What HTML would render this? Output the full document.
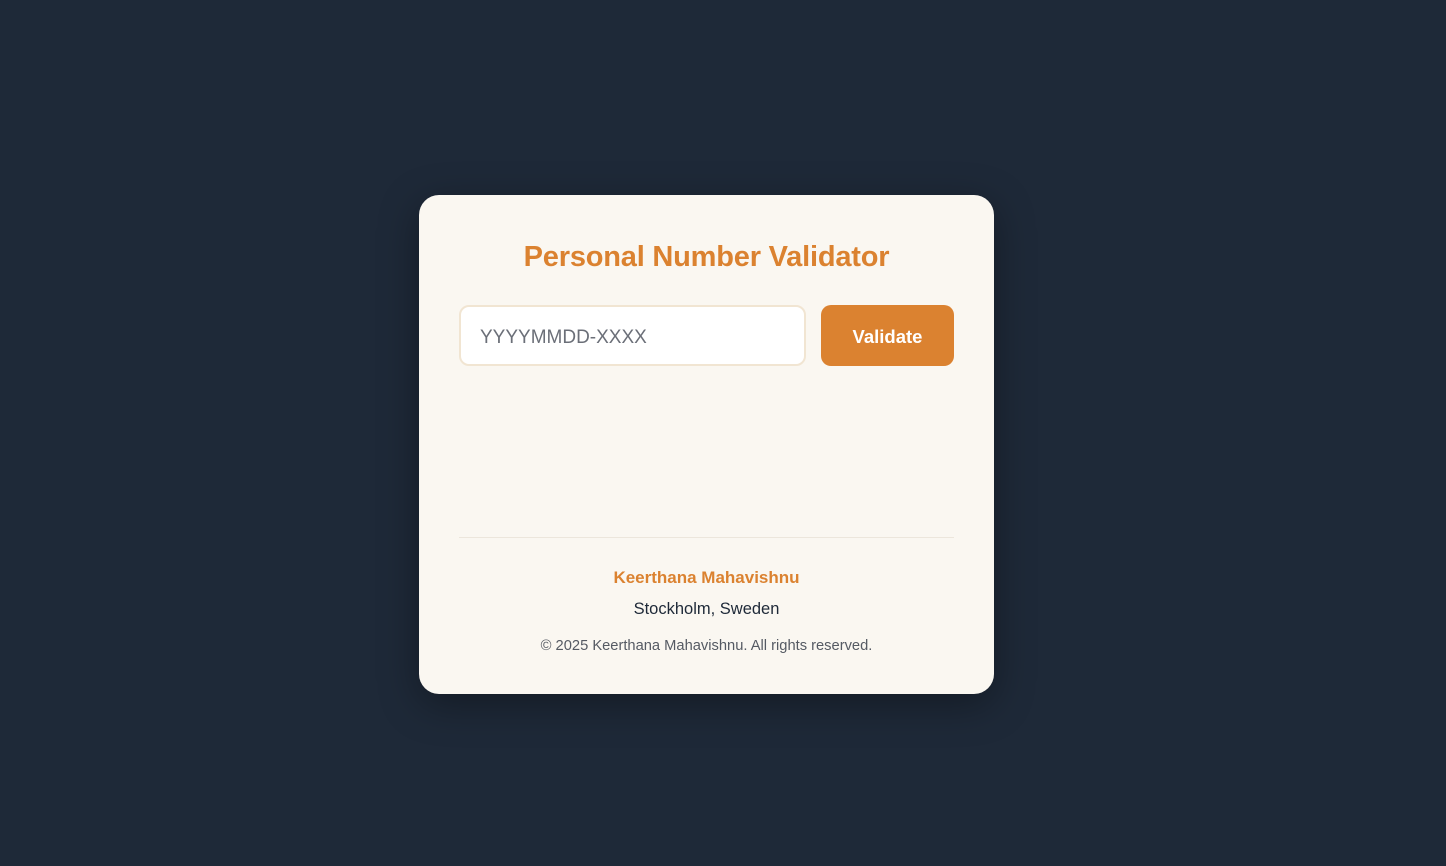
<!DOCTYPE html>
<html><head><meta charset="utf-8"><style>
html,body{margin:0;padding:0;}
body{width:1446px;height:866px;background:#1e2938;font-family:"Liberation Sans",sans-serif;position:relative;overflow:hidden;}
.card{position:absolute;left:419px;top:195px;width:575px;height:499px;background:#faf7f1;border-radius:20px;box-shadow:0 10px 40px rgba(0,0,0,.35);}
.t{position:absolute;left:0;width:575px;text-align:center;white-space:nowrap;}
.title{top:42px;font-size:29px;font-weight:bold;color:#db8230;line-height:40px;letter-spacing:-0.2px;}
.inp{position:absolute;left:40px;top:110px;width:343px;height:57px;border:2px solid #f1e5d2;border-radius:10px;background:#fff;box-sizing:content-box;}
.inp span{position:absolute;left:19px;top:2px;line-height:57px;font-size:19px;color:#6b6f78;}
.btn{position:absolute;left:402px;top:112px;width:133px;height:61px;background:#db8230;border-radius:10px;color:#fff;font-weight:bold;font-size:18.5px;line-height:61px;text-align:center;}
.btn{top:110px;padding-top:2px;height:59px;line-height:59px;}
.hr{position:absolute;left:40px;top:342px;width:495px;height:1px;background:#ece6dc;}
.name{top:371px;font-size:17px;font-weight:bold;color:#db8230;line-height:24px;}
.city{top:402px;font-size:16.5px;color:#1e2938;line-height:24px;}
.copy{top:441px;font-size:14.7px;color:#555a63;line-height:20px;}
</style></head><body>
<div class="card">
<div class="t title">Personal Number Validator</div>
<div class="inp"><span>YYYYMMDD-XXXX</span></div>
<div class="btn">Validate</div>
<div class="hr"></div>
<div class="t name">Keerthana Mahavishnu</div>
<div class="t city">Stockholm, Sweden</div>
<div class="t copy">© 2025 Keerthana Mahavishnu. All rights reserved.</div>
</div>
</body></html>
